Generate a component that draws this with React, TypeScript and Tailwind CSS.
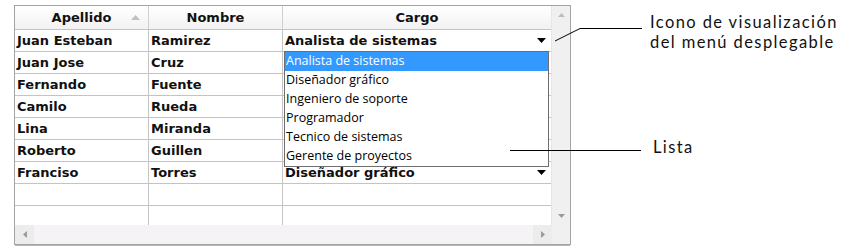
import React from "react";

const rows: [string, string, string | null][] = [
  ["Juan Esteban", "Ramirez", "Analista de sistemas"],
  ["Juan Jose", "Cruz", null],
  ["Fernando", "Fuente", null],
  ["Camilo", "Rueda", null],
  ["Lina", "Miranda", null],
  ["Roberto", "Guillen", null],
  ["Franciso", "Torres", "Diseñador gráfico"],
  ["", "", null],
];

const items = [
  "Analista de sistemas",
  "Diseñador gráfico",
  "Ingeniero de soporte",
  "Programador",
  "Tecnico de sistemas",
  "Gerente de proyectos",
];

const cellFont = { fontFamily: '"DejaVu Sans", Verdana, sans-serif' };

function DropArrow() {
  return (
    <svg width="9" height="5" viewBox="0 0 9 5" className="shrink-0">
      <polygon points="0,0 9,0 4.5,5" fill="#000" />
    </svg>
  );
}

export default function App() {
  return (
    <div className="relative w-[851px] h-[249px] bg-white overflow-hidden">
      <div className="flex pt-[5px] pl-[14px]">
        {/* Grid */}
        <div className="relative w-[557px] h-[240px] border border-[#a3a3a3] flex flex-col bg-white">
          <div className="flex h-[219px]">
            <div className="w-[536px] flex flex-col overflow-hidden" style={cellFont}>
              {/* header */}
              <div className="flex h-[24px] shrink-0 border-b border-[#c4c4c4] bg-gradient-to-b from-white to-[#f2f2f2] text-[13px] font-bold text-[#111]">
                <div className="relative w-[134px] border-r border-[#d0d0d0] flex items-center justify-center">
                  Apellido
                  <svg width="9" height="5" viewBox="0 0 9 5" className="absolute right-[8px] top-[9px]">
                    <polygon points="0,5 9,5 4.5,0" fill="#c0c0c0" />
                  </svg>
                </div>
                <div className="w-[134px] border-r border-[#d0d0d0] flex items-center justify-center">Nombre</div>
                <div className="w-[268px] flex items-center justify-center">Cargo</div>
              </div>
              {rows.map((r, i) => (
                <div key={i} className="flex h-[22px] shrink-0 border-b border-[#c4c4c4] text-[13px] font-bold text-[#111]">
                  <div className="w-[134px] border-r border-[#c4c4c4] flex items-center pl-[2px]">{r[0]}</div>
                  <div className="w-[134px] border-r border-[#c4c4c4] flex items-center pl-[2px]">{r[1]}</div>
                  <div className="w-[268px] flex items-center justify-between pl-[2px] pr-[5px]">
                    <span>{r[2] ?? ""}</span>
                    {r[2] ? <DropArrow /> : null}
                  </div>
                </div>
              ))}
              <div className="flex h-[22px] shrink-0 text-[12px]">
                <div className="w-[134px] border-r border-[#c4c4c4]" />
                <div className="w-[134px] border-r border-[#c4c4c4]" />
                <div className="w-[268px]" />
              </div>
            </div>
            {/* vertical scrollbar */}
            <div className="w-[19px] bg-[#f0f0f0] border-l border-[#e6e6e6] flex flex-col items-center justify-between py-[7px]">
              <svg width="7" height="4" viewBox="0 0 7 4">
                <polygon points="0,4 7,4 3.5,0" fill="#bdbdbd" />
              </svg>
              <svg width="7" height="4" viewBox="0 0 7 4">
                <polygon points="0,0 7,0 3.5,4" fill="#9a9a9a" />
              </svg>
            </div>
          </div>
          {/* horizontal scrollbar */}
          <div className="flex h-[19px] bg-[#f6f3f7]">
            <div className="w-[19px] bg-[#ececec] flex items-center justify-center">
              <svg width="4" height="7" viewBox="0 0 4 7">
                <polygon points="4,0 4,7 0,3.5" fill="#9a9a9a" />
              </svg>
            </div>
            <div className="flex-1" />
            <div className="w-[19px] bg-[#ececec] flex items-center justify-center">
              <svg width="4" height="7" viewBox="0 0 4 7">
                <polygon points="0,0 0,7 4,3.5" fill="#9a9a9a" />
              </svg>
            </div>
            <div className="w-[18px] bg-[#f0f0f0]" />
          </div>
          <div className="absolute left-0 right-0 bottom-[-2px] h-[1px] bg-[#b8b8b8]" />

          {/* dropdown list */}
          <div
            className="absolute left-[269px] top-[45px] w-[265px] h-[116px] border border-[#6e6e6e] bg-white flex flex-col text-[12.5px] text-black"
            style={{ fontFamily: '"Open Sans", "Noto Sans", sans-serif' }}
          >
            {items.map((t, i) => (
              <div
                key={t}
                className={
                  "h-[19px] shrink-0 flex items-center pl-[1px] leading-none " +
                  (i === 0 ? "bg-[#3399ff] text-white" : "")
                }
              >
                {t}
              </div>
            ))}
          </div>
        </div>

        {/* annotations */}
        <div
          className="ml-[79px] pt-[7px] flex flex-col text-[16.5px] leading-[20px] tracking-[1.4px] text-[#111]"
          style={{ fontFamily: 'Lato, "Open Sans", sans-serif' }}
        >
          <div>Icono de visualización</div>
          <div>del menú desplegable</div>
          <div className="mt-[85px] ml-[3px]">Lista</div>
        </div>
      </div>

      <svg className="absolute left-0 top-0 pointer-events-none" width="851" height="249">
        <polyline points="555,41 580,28.5 642,28.5" fill="none" stroke="#000" strokeWidth="1" />
        <line x1="510" y1="150.5" x2="641" y2="150.5" stroke="#000" strokeWidth="1" />
      </svg>
    </div>
  );
}
